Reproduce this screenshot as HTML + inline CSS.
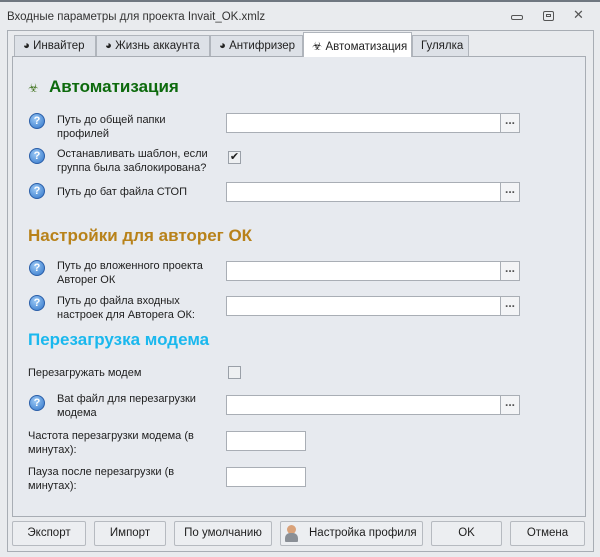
<!DOCTYPE html>
<html><head><meta charset="utf-8"><style>
*{box-sizing:border-box;margin:0;padding:0}
body{width:600px;height:557px;background:#e9ebee;font-family:"Liberation Sans",sans-serif;font-size:11px;color:#1e1e1e;position:relative;overflow:hidden}
.a{position:absolute}
.top{left:0;top:0;width:600px;height:2px;background:#6f7780}
.title{left:7px;top:11px;font-size:11.5px;color:#333}
.frame{left:7px;top:30px;width:587px;height:522px;border:1px solid #a8adb4}
.panel{left:12px;top:56px;width:574px;height:461px;border:1px solid #a8adb4;background:#e7eaef}
.tab{top:35px;height:21px;border:1px solid #b0b5bc;border-bottom:none;background:#dde1e7;font-size:11.5px;padding:4px 0 0 8px;color:#222}
.tab.act{top:32px;height:25px;background:#fff;padding-top:6px}
.q{width:16px;height:16px;border-radius:50%;background:radial-gradient(circle at 40% 35%,#9cc9f5,#2f74c9);border:1px solid #2a5ea8;color:#fff;font-weight:bold;font-size:11px;text-align:center;line-height:14px}
.lbl{font-size:11px;line-height:14px}
.in{background:#fff;border:1px solid #a9aeb5;height:20px}
.dots{width:20px;height:20px;border:1px solid #a9aeb5;background:#f3f4f6;font-weight:bold;color:#555;text-align:center;line-height:12px;font-size:12px}
.cb{width:13px;height:13px;border:1px solid #9aa0a8;background:#eef0f2}
.h{font-weight:bold;font-size:17px}
.btn{top:521px;height:25px;border:1px solid #b6bac0;border-radius:2px;background:#eceef1;text-align:center;line-height:23px;font-size:11.5px}
.win{font-size:13px;color:#555}
</style></head><body>
<div class="a top"></div>
<div class="a title">Входные параметры для проекта Invait_OK.xmlz</div>
<div class="a" style="left:511px;top:15px;width:12px;height:5px;border:1px solid #555;border-radius:2px"></div>
<div class="a" style="left:543px;top:11px;width:11px;height:10px;border:1px solid #555;border-radius:2px"><div style="margin:2px auto;width:5px;height:3px;border:1px solid #555"></div></div>
<div class="a win" style="left:573px;top:7px">✕</div>
<div class="a frame"></div>
<div class="a panel"></div>
<div class="a tab" style="left:14px;width:82px">◕ Инвайтер</div>
<div class="a tab" style="left:96px;width:114px">◕ Жизнь аккаунта</div>
<div class="a tab" style="left:210px;width:93px">◕ Антифризер</div>
<div class="a tab act" style="left:303px;width:109px">☣ Автоматизация</div>
<div class="a tab" style="left:412px;width:57px">Гулялка</div>

<div class="a" style="left:28px;top:81px;color:#4a7a2a;font-size:12px">☣</div>
<div class="a h" style="left:49px;top:77px;color:#0d6a0d">Автоматизация</div>

<div class="a q" style="left:29px;top:113px">?</div>
<div class="a lbl" style="left:57px;top:113px">Путь до общей папки<br>профилей</div>
<div class="a in" style="left:226px;top:113px;width:275px"></div><div class="a dots" style="left:500px;top:113px">...</div>

<div class="a q" style="left:29px;top:148px">?</div>
<div class="a lbl" style="left:57px;top:147px">Останавливать шаблон, если<br>группа была заблокирована?</div>
<div class="a cb" style="left:228px;top:151px;font-size:11px;line-height:10px;text-align:center">✔</div>

<div class="a q" style="left:29px;top:183px">?</div>
<div class="a lbl" style="left:57px;top:185px">Путь до бат файла СТОП</div>
<div class="a in" style="left:226px;top:182px;width:275px"></div><div class="a dots" style="left:500px;top:182px">...</div>

<div class="a h" style="left:28px;top:226px;color:#b8821a">Настройки для авторег ОК</div>
<div class="a q" style="left:29px;top:260px">?</div>
<div class="a lbl" style="left:57px;top:259px">Путь до вложенного проекта<br>Авторег ОК</div>
<div class="a in" style="left:226px;top:261px;width:275px"></div><div class="a dots" style="left:500px;top:261px">...</div>
<div class="a q" style="left:29px;top:295px">?</div>
<div class="a lbl" style="left:57px;top:294px">Путь до файла входных<br>настроек для Авторега ОК:</div>
<div class="a in" style="left:226px;top:296px;width:275px"></div><div class="a dots" style="left:500px;top:296px">...</div>

<div class="a h" style="left:28px;top:330px;color:#1ab8ee">Перезагрузка модема</div>
<div class="a lbl" style="left:28px;top:366px">Перезагружать модем</div>
<div class="a cb" style="left:228px;top:366px"></div>
<div class="a q" style="left:29px;top:395px">?</div>
<div class="a lbl" style="left:57px;top:392px">Bat файл для перезагрузки<br>модема</div>
<div class="a in" style="left:226px;top:395px;width:275px"></div><div class="a dots" style="left:500px;top:395px">...</div>
<div class="a lbl" style="left:28px;top:429px">Частота перезагрузки модема (в<br>минутах):</div>
<div class="a in" style="left:226px;top:431px;width:80px"></div>
<div class="a lbl" style="left:28px;top:465px">Пауза после перезагрузки (в<br>минутах):</div>
<div class="a in" style="left:226px;top:467px;width:80px"></div>

<div class="a btn" style="left:12px;width:74px">Экспорт</div>
<div class="a btn" style="left:94px;width:72px">Импорт</div>
<div class="a btn" style="left:174px;width:98px">По умолчанию</div>
<div class="a btn" style="left:280px;width:143px;text-align:left;padding-left:28px">Настройка профиля
<div class="a" style="left:6px;top:3px;width:9px;height:9px;border-radius:50%;background:#d9a27a"></div>
<div class="a" style="left:4px;top:11px;width:13px;height:9px;border-radius:5px 5px 1px 1px;background:#8a8f96"></div></div>
<div class="a btn" style="left:431px;width:71px">OK</div>
<div class="a btn" style="left:510px;width:75px">Отмена</div>
</body></html>
